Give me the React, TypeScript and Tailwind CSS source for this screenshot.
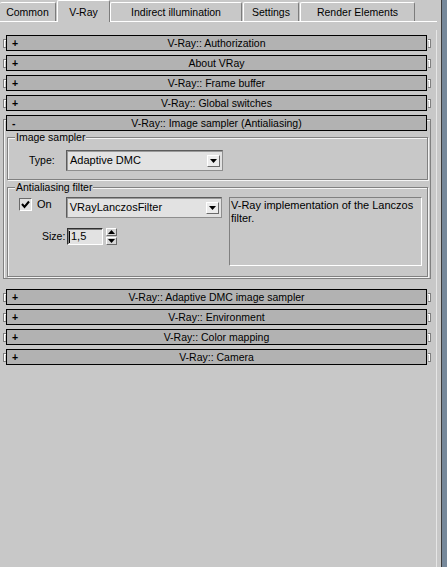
import React from "react";

const tabs = [
  { label: "Common", width: "w-[56px]", gap: "" },
  { label: "V-Ray", width: "w-[53px]", gap: "ml-px", active: true },
  { label: "Indirect illumination", width: "w-[132px]", gap: "" },
  { label: "Settings", width: "w-[56px]", gap: "ml-px" },
  { label: "Render Elements", width: "w-[115px]", gap: "ml-px" },
];

const before = [
  "V-Ray:: Authorization",
  "About VRay",
  "V-Ray:: Frame buffer",
  "V-Ray:: Global switches",
];

const after = [
  "V-Ray:: Adaptive DMC image sampler",
  "V-Ray:: Environment",
  "V-Ray:: Color mapping",
  "V-Ray:: Camera",
];

function Tab({ label, width, gap, active }: { label: string; width: string; gap: string; active?: boolean }) {
  if (active) {
    return (
      <div
        className={`${width} ${gap} relative z-10 -mb-px flex h-[22px] items-center justify-center rounded-t-[2px] border-l border-t border-r border-l-white border-t-white border-r-[#7c7c7c] bg-[#c8c8c8] pt-[1px]`}
      >
        {label}
      </div>
    );
  }
  return (
    <div
      className={`${width} ${gap} flex h-[19px] items-center justify-center rounded-t-[2px] border-t border-r border-t-white border-r-[#7c7c7c] ${label === "Common" ? "" : "border-l border-l-white"}`}
    >
      {label}
    </div>
  );
}

function Bar({ title, open }: { title: string; open?: boolean }) {
  return (
    <div className="flex h-[16px] w-[421px] items-center border border-black bg-[#b2b2b2]">
      <span className="w-[16px] pl-[5px] font-bold leading-[13px]">{open ? "-" : "+"}</span>
      <span className="flex-1 pr-[16px] text-center leading-[13px]">{title}</span>
    </div>
  );
}

function Rollout({ title }: { title: string }) {
  return (
    <div className="flex h-[16px] items-center">
      <div className="mt-[1px] h-[9px] w-[3px] border border-r-0 border-[#808080] shadow-[inset_1px_1px_0_#fff]" />
      <Bar title={title} />
      <div className="mt-[1px] ml-px h-[9px] w-[3px] border border-l-0 border-[#808080] shadow-[inset_-1px_1px_0_#fff]" />
    </div>
  );
}

function Arrow({ up }: { up?: boolean }) {
  return (
    <svg width="7" height="4" viewBox="0 0 7 4">
      <polygon points={up ? "3.5,0 7,4 0,4" : "0,0 7,0 3.5,4"} fill="#000" />
    </svg>
  );
}

function Dropdown({ value }: { value: string }) {
  return (
    <div className="flex h-[21px] w-[157px] items-center border border-t-[#5c5c5c] border-l-[#5c5c5c] border-r-[#8e8e8e] border-b-[#8e8e8e] bg-[#e2e2e2] shadow-[inset_1px_1px_0_#9a9a9a]">
      <span className="flex-1 pl-[3px] text-[11px]">{value}</span>
      <div className="mr-[2px] flex h-[12px] w-[13px] items-center justify-center border border-t-white border-l-white border-r-[#6a6a6a] border-b-[#6a6a6a] bg-[#ececec]">
        <Arrow />
      </div>
    </div>
  );
}

function Group({ label, height, children }: { label: string; height: string; children: React.ReactNode }) {
  return (
    <div
      className={`relative ml-[3px] ${height} w-[421px] border border-[#808080] shadow-[inset_1px_1px_0_#f4f4f4,1px_1px_0_#f4f4f4]`}
    >
      <span className="absolute -top-[7px] left-[7px] bg-[#c8c8c8] px-px leading-[13px]">{label}</span>
      {children}
    </div>
  );
}

export default function App() {
  return (
    <div className="flex h-[567px] w-[447px] bg-[#c8c8c8] font-['Liberation_Sans',Arial,sans-serif] text-[10.5px] leading-[13px] text-black">
      <div className="flex w-[441px] flex-col">
        <div className="flex h-[22px] w-[437px] items-end border-b border-white">
          {tabs.map((t) => (
            <Tab key={t.label} {...t} />
          ))}
        </div>

        <div className="flex flex-1">
          <div className="flex w-[436px] flex-col gap-[4px] pl-[3px] pt-[13px]">
            {before.map((t) => (
              <Rollout key={t} title={t} />
            ))}

            <div className="mt-[4px] mb-[6px] w-[428px] border border-[#808080] pb-px shadow-[inset_1px_1px_0_#f4f4f4]">
              <div className="-mt-[5px] ml-[2px]">
                <Bar title="V-Ray:: Image sampler (Antialiasing)" open />
              </div>

              <div className="mt-[6px]">
                <Group label="Image sampler" height="h-[43px]">
                  <div className="flex items-center pl-[21px] pt-[12px]">
                    <span className="w-[37px]">Type:</span>
                    <Dropdown value="Adaptive DMC" />
                  </div>
                </Group>
              </div>

              <div className="mt-[7px]">
                <Group label="Antialiasing filter" height="h-[90px]">
                  <div className="flex pt-[9px]">
                    <div className="flex w-[214px] flex-col">
                      <div className="flex items-start pl-[11px]">
                        <div className="mt-px flex h-[13px] w-[13px] items-center justify-center border border-t-[#6a6a6a] border-l-[#6a6a6a] border-r-white border-b-white bg-[#e2e2e2]">
                          <svg width="9" height="9" viewBox="0 0 9 9">
                            <polyline points="1,4 3.5,7 8,1.5" fill="none" stroke="#000" strokeWidth="2" />
                          </svg>
                        </div>
                        <span className="ml-[5px] w-[29px] pt-[1px] text-[11px]">On</span>
                        <Dropdown value="VRayLanczosFilter" />
                      </div>
                      <div className="mt-[10px] flex items-center pl-[34px]">
                        <span className="w-[25px]">Size:</span>
                        <div className="flex h-[17px] w-[36px] items-center border border-t-[#303030] border-l-[#303030] border-r-white border-b-white bg-[#e2e2e2] shadow-[inset_1px_1px_0_#808080]">
                          <span className="ml-[1px] h-[12px] w-px bg-black" />
                          <span className="pl-[1px] text-[11px]">1,5</span>
                        </div>
                        <div className="ml-[3px] flex h-[17px] w-[11px] flex-col">
                          <div className="flex h-[8px] items-center justify-center border border-t-white border-l-white border-r-[#6a6a6a] border-b-[#6a6a6a] bg-[#d6d6d6]">
                            <Arrow up />
                          </div>
                          <div className="mt-px flex h-[8px] items-center justify-center border border-t-white border-l-white border-r-[#6a6a6a] border-b-[#6a6a6a] bg-[#d6d6d6]">
                            <Arrow />
                          </div>
                        </div>
                      </div>
                    </div>
                    <div className="ml-[7px] h-[69px] w-[193px] border border-t-[#808080] border-l-[#808080] border-r-white border-b-white pl-px pt-[1px] text-[11px] leading-[13px]">
                      V-Ray implementation of the Lanczos filter.
                    </div>
                  </div>
                </Group>
              </div>
            </div>

            {after.map((t) => (
              <Rollout key={t} title={t} />
            ))}
          </div>
          <div className="mt-[8px] w-px bg-[#e6e6e6]" />
        </div>
      </div>
      <div className="w-px bg-[#3c3c3c]" />
      <div className="w-[5px] bg-[#76889a]" />
    </div>
  );
}
